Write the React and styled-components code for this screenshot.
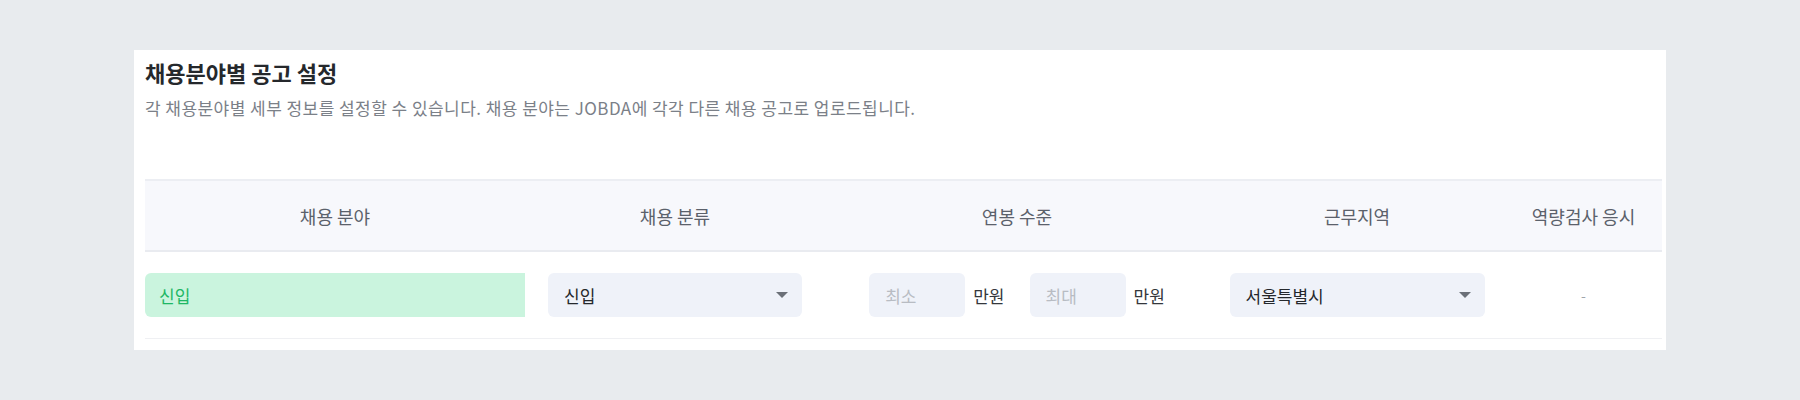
import React from "react";
import styled, { createGlobalStyle } from "styled-components";

const GlobalStyle = createGlobalStyle`
  body {
    margin: 0;
    background: #e8ebee;
    font-family: "Noto Sans CJK KR", "Noto Sans", sans-serif;
  }
`;

const Page = styled.div`
  width: 1800px;
  height: 400px;
  padding: 50px 0 0 134px;
  box-sizing: border-box;
`;

const Card = styled.section`
  width: 1532px;
  height: 300px;
  background: #fff;
  padding: 8px 4px 0 11px;
  box-sizing: border-box;
`;

const Title = styled.h2`
  margin: 0;
  font-size: 22px;
  line-height: 28px;
  font-weight: 700;
  color: #25282c;
`;

const Desc = styled.p`
  margin: 10px 0 0;
  font-size: 17px;
  line-height: 24px;
  color: #7b8088;
  letter-spacing: 0.45px;
`;

const Table = styled.div`
  margin-top: 59px;
  width: 1517px;
`;

const cols = "380px 300px 384px 296px 157px";

const HeadRow = styled.div`
  display: grid;
  grid-template-columns: ${cols};
  height: 73px;
  background: #f7f8fc;
  border-top: 2px solid #eceef3;
  border-bottom: 2px solid #e9ebf0;
  box-sizing: border-box;
`;

const HeadCell = styled.div`
  display: flex;
  align-items: center;
  justify-content: center;
  font-size: 18px;
  color: #5b616b;
`;

const BodyRow = styled.div`
  display: grid;
  grid-template-columns: ${cols};
  height: 87px;
  align-items: center;
  border-bottom: 1px solid #eff0f3;
  box-sizing: border-box;
`;

const Cell = styled.div`
  display: flex;
  align-items: center;
  justify-content: ${(p) => (p.$start ? "flex-start" : "center")};
  gap: 8px;
`;

const FieldInput = styled.div`
  width: 100%;
  height: 44px;
  border-radius: 6px 0 0 6px;
  background: #caf4de;
  color: #1eb765;
  font-size: 17px;
  display: flex;
  align-items: center;
  padding-left: 14px;
  box-sizing: border-box;
`;

const Select = styled.div`
  width: ${(p) => p.$w}px;
  height: 44px;
  border-radius: 6px;
  background: #eff2f9;
  color: #25282c;
  font-size: 17px;
  display: flex;
  align-items: center;
  justify-content: space-between;
  padding: 0 14px 0 16px;
  box-sizing: border-box;
`;

const Arrow = styled.span`
  width: 0;
  height: 0;
  border-left: 6px solid transparent;
  border-right: 6px solid transparent;
  border-top: 6px solid #6b7078;
`;

const SmallInput = styled.div`
  width: 96px;
  height: 44px;
  border-radius: 6px;
  background: #eff2f9;
  color: #b8bcc3;
  font-size: 17px;
  display: flex;
  align-items: center;
  padding-left: 16px;
  box-sizing: border-box;
`;

const Unit = styled.span`
  font-size: 17px;
  color: #34373c;
  margin-right: 17px;
  &:last-child {
    margin-right: 0;
  }
`;

const Dash = styled.span`
  font-size: 14px;
  color: #a0a4ab;
`;

const headers = ["채용 분야", "채용 분류", "연봉 수준", "근무지역", "역량검사 응시"];

export default function App() {
  return (
    <Page>
      <GlobalStyle />
      <Card>
        <Title>채용분야별 공고 설정</Title>
        <Desc>
          각 채용분야별 세부 정보를 설정할 수 있습니다. 채용 분야는 JOBDA에 각각 다른 채용 공고로 업로드됩니다.
        </Desc>
        <Table>
          <HeadRow>
            {headers.map((h) => (
              <HeadCell key={h}>{h}</HeadCell>
            ))}
          </HeadRow>
          <BodyRow>
            <Cell $start>
              <FieldInput>신입</FieldInput>
            </Cell>
            <Cell>
              <Select $w={254}>
                신입
                <Arrow />
              </Select>
            </Cell>
            <Cell>
              <SmallInput>최소</SmallInput>
              <Unit>만원</Unit>
              <SmallInput>최대</SmallInput>
              <Unit>만원</Unit>
            </Cell>
            <Cell>
              <Select $w={255}>
                서울특별시
                <Arrow />
              </Select>
            </Cell>
            <Cell>
              <Dash>-</Dash>
            </Cell>
          </BodyRow>
        </Table>
      </Card>
    </Page>
  );
}
